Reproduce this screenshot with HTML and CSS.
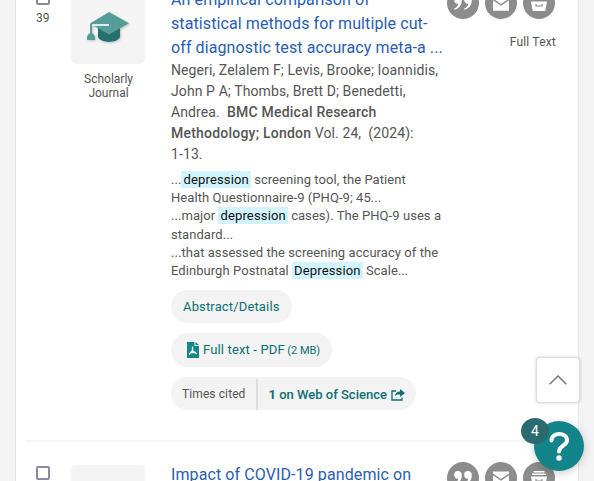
FILE: index.html
```
<!DOCTYPE html>
<html lang="en">
<head>
<meta charset="utf-8">
<title>Search results</title>
<link rel="stylesheet" href="styles.css">
</head>
<body>
<svg class="defs" width="0" height="0" aria-hidden="true">
  <symbol id="quote" viewBox="0 0 32 32">
    <path d="M10.800 9a3.800 3.800 0 0 1 4 4.200c0 5-3 8.400-7.200 9.600l-.5-1.200c2.500-1.200 3.900-2.600 4.100-4.900a3.800 3.800 0 1 1-.4-7.700zM20.800 9a3.800 3.800 0 0 1 4 4.200c0 5-3 8.400-7.200 9.600l-.5-1.200c2.500-1.200 3.900-2.600 4.100-4.900a3.800 3.800 0 1 1-.4-7.700z"/>
  </symbol>
  <symbol id="mail" viewBox="0 0 32 32">
    <path d="M8 9.500h16v2L16 17l-8-5.500zM8 13.300l8 5.400 8-5.400v10.500H8z"/>
  </symbol>
  <symbol id="save" viewBox="0 0 32 32">
    <path d="M10.500 9h11v1.500h-11zM9 11.500h14V13H9zM8 14.500h16L22.300 24H9.700z"/>
    <path class="slot" d="M13 17v2h6v-2"/>
  </symbol>
</svg>
<main class="results">
  <article class="item">
    <div class="select"><span class="checkbox"></span><span class="number">39</span></div>
    <div class="source">
      <div class="thumb">
        <svg width="74" height="74" viewBox="0 0 74 74">
          <g class="cap">
            <path class="base" d="M27 36v11c3 6.500 19 6.500 22 0V36L38 44z"/>
            <path class="board" d="M38 22l20 11.300L38 44.500 19 33.500z"/>
            <path class="cord" d="M38 35H20v10"/>
            <path class="board" d="M18 43.500h4l2 3V50h-8v-3.500z"/>
            <path class="line" d="M21 35h17"/>
          </g>
        </svg>
      </div>
      <p class="type">Scholarly<br>Journal</p>
    </div>
    <div class="content">
      <h3 class="title">An empirical comparison of<br>statistical methods for multiple cut-<br>off diagnostic test accuracy meta-a ...</h3>
      <p class="citation">Negeri, Zelalem F; Levis, Brooke; Ioannidis,<br>John P A; Thombs, Brett D; Benedetti,<br>Andrea. &nbsp;<b>BMC Medical Research<br>Methodology; London</b> Vol. 24, &nbsp;(2024):<br>1-13.</p>
      <p class="snippet">...<mark>depression</mark> screening tool, the Patient<br>Health Questionnaire-9 (PHQ-9; 45...<br>...major <mark>depression</mark> cases). The PHQ-9 uses a<br>standard...<br>...that assessed the screening accuracy of the<br>Edinburgh Postnatal <mark>Depression</mark> Scale...</p>
      <div class="links">
        <a class="pill">Abstract/Details</a>
        <a class="pill pdf">
          <svg width="12" height="16" viewBox="0 0 12 16"><path class="page" d="M0 0h7.500v4H12v12H0z"/><path class="page" d="M8.500 0L12 3H8.500z"/><path class="mark" d="M5.500 4.500v4L9.800 12M5.500 8.500L2 12.500M3 10.500h6"/></svg>
          <span>Full text - PDF <small>(2 MB)</small></span>
        </a>
        <div class="pill cited">
          <span class="label">Times cited</span>
          <a class="count"><span><b>1</b> on Web of Science</span>
            <svg width="14" height="12" viewBox="0 0 14 12"><path class="frame" d="M5 2H1v9h10V8.500"/><path class="arrow" d="M9 0l5 4-5 4V5.500c-2.500-.2-4 .3-5 2C4.200 4 6 2.600 9 2.500z"/></svg>
          </a>
        </div>
      </div>
    </div>
    <div class="side">
      <div class="actions">
        <svg class="action"><use href="#quote"/></svg>
        <svg class="action"><use href="#mail"/></svg>
        <svg class="action"><use href="#save"/></svg>
      </div>
      <p class="access">Full Text</p>
    </div>
  </article>
  <article class="item">
    <div class="select"><span class="checkbox"></span></div>
    <div class="source"><div class="thumb"></div></div>
    <div class="content"><h3 class="title">Impact of COVID-19 pandemic on</h3></div>
    <div class="side">
      <div class="actions">
        <svg class="action"><use href="#quote"/></svg>
        <svg class="action"><use href="#mail"/></svg>
        <svg class="action"><use href="#save"/></svg>
      </div>
    </div>
  </article>
</main>
<button class="to-top"><svg width="18" height="10" viewBox="0 0 18 10"><path d="M.7 9.300L9 1l8.300 8.300"/></svg></button>
<div class="help">
  <svg width="50" height="50" viewBox="0 0 50 50"><path d="M17.500 19.500c0-9 15.500-8 15.500-.3 0 5.800-8 5-8 11.300"/><circle cx="25" cy="37" r="2.700"/></svg>
  <span class="badge">4</span>
</div>
</body>
</html>
```
FILE: styles.css
```
* { box-sizing: border-box; }
html { overflow: hidden; }
body {
  margin: 0;
  height: 481px;
  overflow: hidden;
  background: #f4f3f4;
  color: #555;
  font: 14px/21px Roboto, sans-serif;
}
p, h3 { margin: 0; }
.defs { position: absolute; }
.results {
  width: 564px;
  height: 514px;
  overflow: hidden;
  margin: -33px 0 0 15px;
  padding: 0 10px;
  background: #fff;
  border-left: 1px solid #e2e2e2;
  border-right: 1px solid #e8e8e8;
}
.item {
  display: flex;
  height: 475px;
  padding: 23px 13px 0 10px;
  border-bottom: 2px solid #f5f5f5;
}
.item + .item { border: 0; }
.select { width: 35px; padding-top: 1px; flex: none; }
.checkbox {
  display: block;
  width: 14px;
  height: 14px;
  border: 2px solid #8d899e;
  border-radius: 2px;
}
.number { display: block; margin-top: 3px; font-size: 12px; letter-spacing: .1px; }
.source { width: 74px; flex: none; }
.thumb { height: 74px; border-radius: 5px; background: #f4f4f4; }
.thumb svg { display: block; }
.cap { filter: drop-shadow(1px 1px 1px #0003); }
.base { fill: #286f70; }
.board { fill: #559d99; }
.cord { fill: none; stroke: #559d99; stroke-width: 2; }
.line { stroke: #fff; stroke-width: 1.600; }
.type { margin-top: 8px; padding-left: 1px; font-size: 12px; line-height: 14px; text-align: center; }
.content { width: 276px; margin-left: 26px; flex: none; white-space: nowrap; }
.title { margin-top: -2px; font-size: 16px; font-weight: 400; line-height: 24px; letter-spacing: .1px; color: #2a5db0; }
.citation { font-size: 14px; letter-spacing: .1px; }
.citation b { font-weight: 500; letter-spacing: .22px; }
.snippet { margin-top: 6px; font-size: 13px; line-height: 18.200px; letter-spacing: .06px; }
mark { padding: 1px 2px; background: #d2f4ff; color: #111; letter-spacing: .15px; }
.links { display: flex; flex-direction: column; align-items: flex-start; margin-top: 10px; font-size: 13px; letter-spacing: .15px; color: #0e7074; }
.pill { display: flex; align-items: center; height: 33px; padding: 0 12px; border-radius: 17px; background: #f3f3f3; }
.pdf { height: 34px; margin: 10px 0; padding-left: 16px; gap: 4px; }
.pdf small { margin-left: -1px; font-size: 11px; letter-spacing: 0; }
.page { fill: #12868c; }
.mark { fill: none; stroke: #f3f3f3; stroke-width: 1.300; }
.cited { padding: 0 11px; }
.label { padding-top: 2px; font-size: 12px; color: #555; letter-spacing: .1px; }
.count { display: flex; align-items: center; height: 31px; margin: 2px 0 0 10px; padding-left: 11px; border-left: 2px solid #ddd; font-weight: 500; font-size: 13px; letter-spacing: 0; gap: 4px; }
.frame { fill: none; stroke: #0e7074; stroke-width: 1.300; }
.arrow { fill: #0e7074; }
.side { flex: 1; margin-top: -3px; }
.actions { display: flex; gap: 6px; }
.action { width: 32px; height: 32px; border-radius: 50%; background: #8c8c8c; fill: #fff; flex: none; }
.slot { fill: none; stroke: #8c8c8c; stroke-width: 1.200; }
.access { margin: 13px -1px 0 0; font-size: 12px; text-align: right; letter-spacing: .2px; }
.to-top {
  position: absolute;
  left: 536px;
  top: 357px;
  display: grid;
  place-items: center;
  width: 44px;
  height: 46px;
  padding: 0;
  border: 1px solid #ddd;
  border-radius: 4px;
  background: #fff;
  box-shadow: 0 0 3px #0003;
}
.to-top path { fill: none; stroke: #777; stroke-width: 1.500; }
.help { position: absolute; left: 534px; top: 421px; width: 50px; height: 50px; border-radius: 50%; background: #12848a; box-shadow: 0 2px 8px #0003; }
.help svg { display: block; }
.help path { fill: none; stroke: #fff; stroke-width: 4; stroke-linecap: round; }
.help circle { fill: #fff; }
.badge { position: absolute; left: -13px; top: -3px; width: 28px; height: 26px; border-radius: 50%; background: #2b6b6f; color: #fff; font-size: 14px; line-height: 26px; text-align: center; }
```
